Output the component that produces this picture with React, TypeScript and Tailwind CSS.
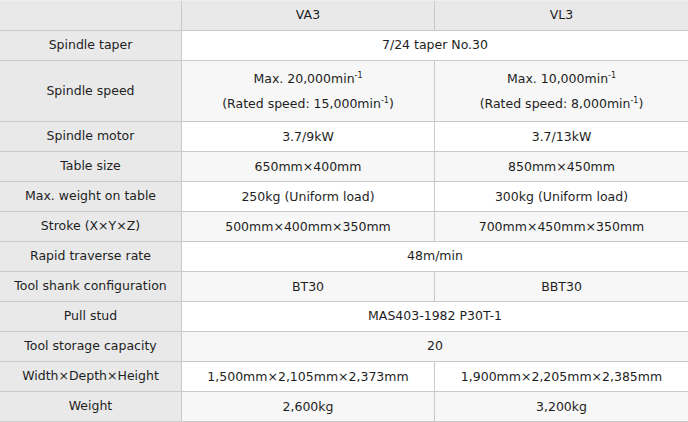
import React from 'react';

type Row = {
  label: string;
  va3: React.ReactNode;
  vl3?: React.ReactNode;
  tall?: boolean;
};

const Min = ({ value }: { value: string }) => (
  <>
    {value}min<sup className="text-[8px] -top-[5px]">-1</sup>
  </>
);

const rows: Row[] = [
  { label: 'Spindle taper', va3: '7/24 taper No.30' },
  {
    label: 'Spindle speed',
    tall: true,
    va3: (
      <>
        <div>Max. <Min value="20,000" /></div>
        <div>(Rated speed: <Min value="15,000" />)</div>
      </>
    ),
    vl3: (
      <>
        <div>Max. <Min value="10,000" /></div>
        <div>(Rated speed: <Min value="8,000" />)</div>
      </>
    ),
  },
  { label: 'Spindle motor', va3: '3.7/9kW', vl3: '3.7/13kW' },
  { label: 'Table size', va3: '650mm×400mm', vl3: '850mm×450mm' },
  { label: 'Max. weight on table', va3: '250kg (Uniform load)', vl3: '300kg (Uniform load)' },
  { label: 'Stroke (X×Y×Z)', va3: '500mm×400mm×350mm', vl3: '700mm×450mm×350mm' },
  { label: 'Rapid traverse rate', va3: '48m/min' },
  { label: 'Tool shank configuration', va3: 'BT30', vl3: 'BBT30' },
  { label: 'Pull stud', va3: 'MAS403-1982 P30T-1' },
  { label: 'Tool storage capacity', va3: '20' },
  { label: 'Width×Depth×Height', va3: '1,500mm×2,105mm×2,373mm', vl3: '1,900mm×2,205mm×2,385mm' },
  { label: 'Weight', va3: '2,600kg', vl3: '3,200kg' },
];

export default function App() {
  return (
    <div
      className="w-[688px] h-[422px] bg-white text-[#1e1e1e] text-[12.5px]"
      style={{ fontFamily: '"DejaVu Sans", Verdana, sans-serif' }}
    >
      <div className="flex h-[31px] border-y border-[#c9c9c9] border-t-[#eeeeee] bg-[#e9e9e9]">
        <div className="w-[182px] border-r border-[#c9c9c9]" />
        <div className="w-[253px] border-r border-[#c9c9c9] flex items-center justify-center">VA3</div>
        <div className="flex-1 flex items-center justify-center">VL3</div>
      </div>
      {rows.map((row, i) => (
        <div
          key={row.label}
          className={`flex border-b border-[#c9c9c9] ${row.tall ? 'h-[61px]' : 'h-[30px]'} ${
            i % 2 === 0 ? 'bg-white' : 'bg-[#f7f7f7]'
          }`}
        >
          <div className="w-[182px] border-r border-[#c9c9c9] bg-[#e9e9e9] flex items-center justify-center">
            {row.label}
          </div>
          {row.vl3 === undefined ? (
            <div className="flex-1 flex flex-col items-center justify-center">{row.va3}</div>
          ) : (
            <>
              <div className="w-[253px] border-r border-[#c9c9c9] flex flex-col items-center justify-center leading-[25px]">
                {row.va3}
              </div>
              <div className="flex-1 flex flex-col items-center justify-center leading-[25px]">{row.vl3}</div>
            </>
          )}
        </div>
      ))}
    </div>
  );
}
